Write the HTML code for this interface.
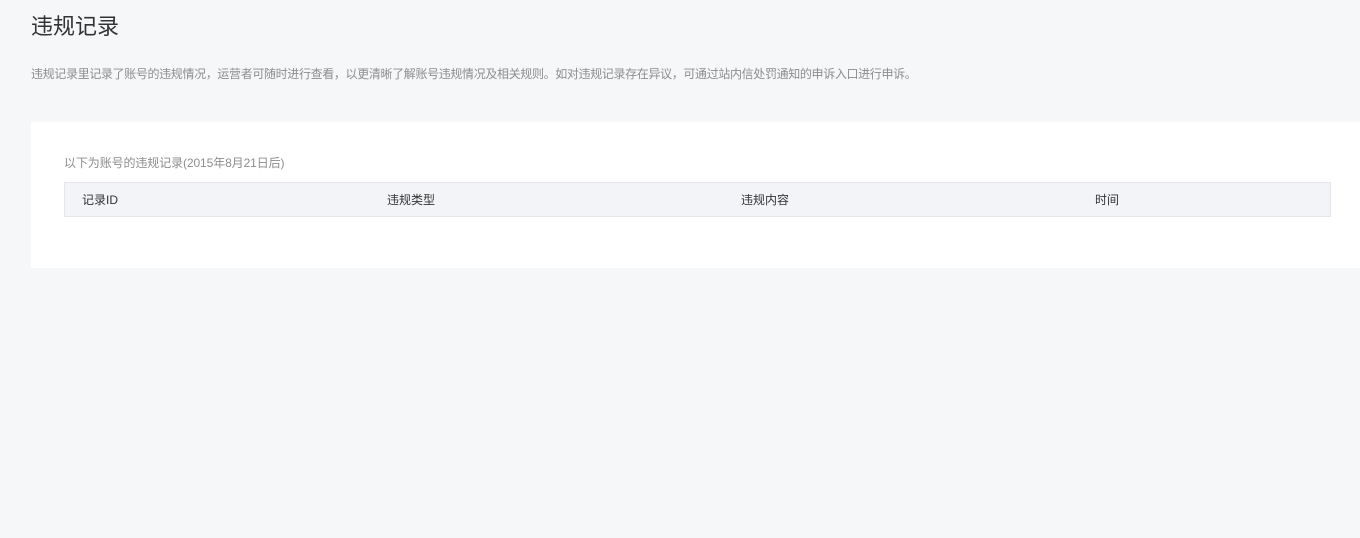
<!DOCTYPE html>
<html><head><meta charset="utf-8"><style>
body{margin:0;width:1360px;height:538px;background:#f6f7f9;font-family:"Liberation Sans","Noto Sans CJK SC",sans-serif;overflow:hidden;position:relative}
.t{position:absolute;left:31px;top:12px;font-size:22px;color:#333;line-height:30px}
.d{position:absolute;left:31px;top:66px;font-size:12px;color:#8d8d8d;line-height:16px;white-space:nowrap;letter-spacing:-0.35px}
.card{position:absolute;left:31px;top:122px;width:1329px;height:146px;background:#fff}
.s{position:absolute;left:33px;top:33px;font-size:12px;color:#8d8d8d;line-height:16px;letter-spacing:-0.1px}
.h{position:absolute;left:33px;top:60px;width:1265px;height:33px;background:#f3f4f7;border:1px solid #e4e6ea;font-size:12px;color:#333}
.h span{position:absolute;top:9px;line-height:16px}
</style></head><body>
<div class="t">违规记录</div>
<div class="d">违规记录里记录了账号的违规情况，运营者可随时进行查看，以更清晰了解账号违规情况及相关规则。如对违规记录存在异议，可通过站内信处罚通知的申诉入口进行申诉。</div>
<div class="card">
<div class="s">以下为账号的违规记录(2015年8月21日后)</div>
<div class="h"><span style="left:17px">记录ID</span><span style="left:322px">违规类型</span><span style="left:676px">违规内容</span><span style="left:1030px">时间</span></div>
</div>
</body></html>
